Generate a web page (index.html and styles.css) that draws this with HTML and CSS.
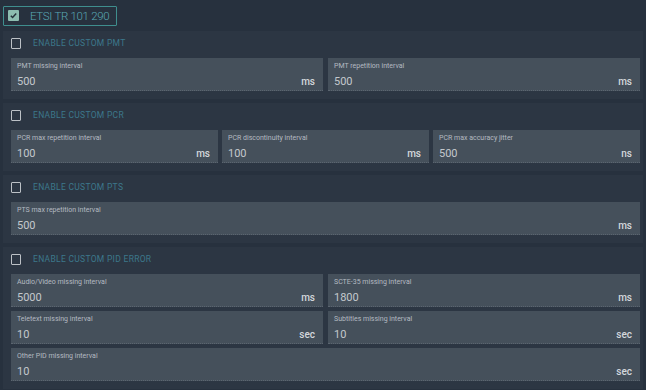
FILE: index.html
```html
<!DOCTYPE html>
<html lang="en">
<head>
  <meta charset="UTF-8">
  <title>ETSI TR 101 290</title>
  <link rel="stylesheet" href="styles.css">
</head>
<body>
  <div class="topbar">
    <label class="master">
      <span class="master-box">
        <svg width="9" height="9" viewBox="0 0 10 10"><path d="M2 5.2l2 2 4-4.4" fill="none" stroke="#24323a" stroke-width="1.6"/></svg>
      </span>
      <span class="master-text">ETSI TR 101 290</span>
    </label>
  </div>

  <div class="section">
    <div class="section-head"><span class="check"></span><span>Enable custom PMT</span></div>
    <div class="row cols-2">
      <div class="field"><div class="label">PMT missing interval</div><div class="value"><span>500</span><span class="unit">ms</span></div></div>
      <div class="field"><div class="label">PMT repetition interval</div><div class="value"><span>500</span><span class="unit">ms</span></div></div>
    </div>
  </div>

  <div class="section">
    <div class="section-head"><span class="check"></span><span>Enable custom PCR</span></div>
    <div class="row cols-3">
      <div class="field"><div class="label">PCR max repetition interval</div><div class="value"><span>100</span><span class="unit">ms</span></div></div>
      <div class="field"><div class="label">PCR discontinuity interval</div><div class="value"><span>100</span><span class="unit">ms</span></div></div>
      <div class="field"><div class="label">PCR max accuracy jitter</div><div class="value"><span>500</span><span class="unit">ns</span></div></div>
    </div>
  </div>

  <div class="section">
    <div class="section-head"><span class="check"></span><span>Enable custom PTS</span></div>
    <div class="row">
      <div class="field"><div class="label">PTS max repetition interval</div><div class="value"><span>500</span><span class="unit">ms</span></div></div>
    </div>
  </div>

  <div class="section">
    <div class="section-head"><span class="check"></span><span>Enable custom PID error</span></div>
    <div class="row cols-2">
      <div class="field"><div class="label">Audio/Video missing interval</div><div class="value"><span>5000</span><span class="unit">ms</span></div></div>
      <div class="field"><div class="label">SCTE-35 missing interval</div><div class="value"><span>1800</span><span class="unit">ms</span></div></div>
    </div>
    <div class="row cols-2">
      <div class="field"><div class="label">Teletext missing interval</div><div class="value"><span>10</span><span class="unit">sec</span></div></div>
      <div class="field"><div class="label">Subtitles missing interval</div><div class="value"><span>10</span><span class="unit">sec</span></div></div>
    </div>
    <div class="row">
      <div class="field"><div class="label">Other PID missing interval</div><div class="value"><span>10</span><span class="unit">sec</span></div></div>
    </div>
  </div>
</body>
</html>
```

FILE: styles.css
```css
* {
    margin: 0;
    padding: 0;
    box-sizing: border-box;
}

:root {
    --background-color: #27313e;
    --panel-background: #2c3643;
    --field-background: #45505b;
    --field-line: #5b6570;
    --accent: #5aa8b4;
    --accent-dim: #3c788b;
    --label-color: #b4bac1;
    --value-color: #c3c8cd;
}

body {
    font-family: Roboto, "Liberation Sans", Arial, sans-serif;
    background-color: var(--background-color);
    width: 646px;
    height: 390px;
    overflow: hidden;
}

.topbar {
    height: 31px;
    padding: 5px 3px 0;
}

.master {
    display: inline-flex;
    align-items: center;
    height: 20px;
    padding: 0 7px 0 4px;
    gap: 11px;
    border: 1px solid #3f8e8e;
    border-radius: 1px;
    white-space: nowrap;
}

.master-box {
    flex: none;
    width: 11px;
    height: 11px;
    background: #8dbdb0;
    border-radius: 1px;
    display: flex;
    align-items: center;
    justify-content: center;
}

.master-text {
    color: var(--accent);
    font-size: 11.5px;
    font-weight: 300;
    letter-spacing: -0.3px;
}

.section {
    margin: 0 3px 4px;
    padding: 0 3px 8px 8px;
    background: var(--panel-background);
}

.section-head {
    height: 24px;
    margin-bottom: 3px;
    display: flex;
    align-items: center;
    gap: 12px;
    color: var(--accent-dim);
    font-size: 8.5px;
    letter-spacing: 0.3px;
    text-transform: uppercase;
}

.check {
    width: 10px;
    height: 11px;
    border: 1.5px solid #bcc1c6;
    border-radius: 1px;
}

.row {
    display: grid;
    grid-template-columns: 1fr;
    gap: 5px;
}

.row + .row {
    margin-top: 4px;
}

.cols-2 {
    grid-template-columns: 1fr 1fr;
}

.cols-3 {
    grid-template-columns: 1fr 1fr 1fr;
    gap: 4px;
}

.field {
    height: 33px;
    background: var(--field-background);
    border-bottom: 1px dotted var(--field-line);
    padding: 4px 8px 0 6px;
}

.label {
    font-size: 7px;
    line-height: 9px;
    color: var(--label-color);
}

.value {
    display: flex;
    justify-content: space-between;
    align-items: baseline;
    margin-top: 4px;
    font-size: 11px;
    line-height: 13px;
    color: var(--value-color);
}

.unit {
    font-size: 10px;
    font-weight: 500;
    color: #d3d7db;
}
```
